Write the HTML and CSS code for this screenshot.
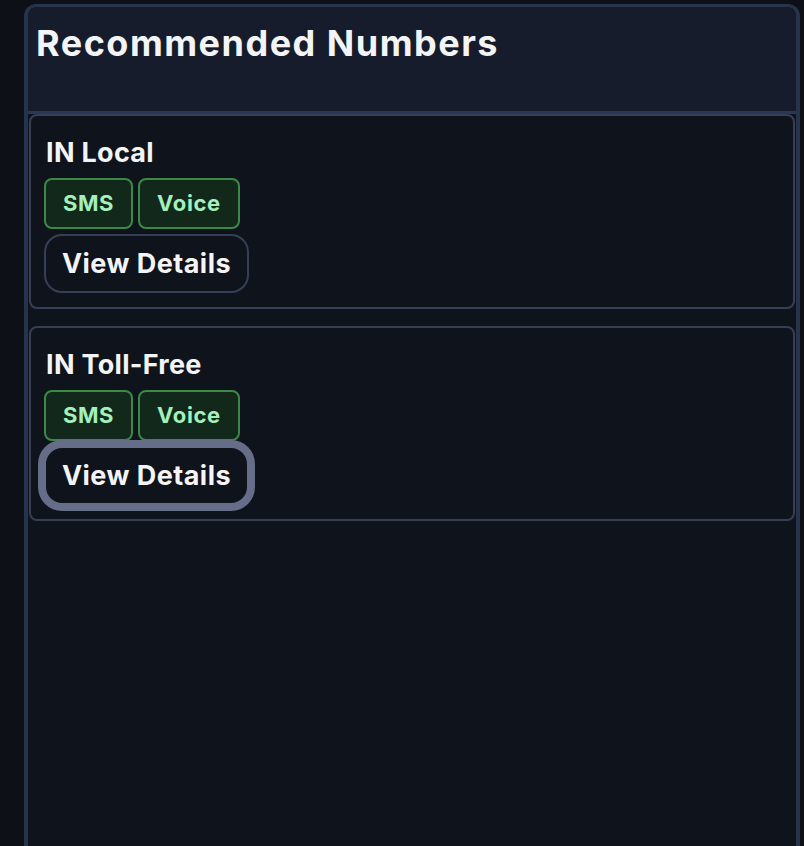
FILE: index.html
```html
<!DOCTYPE html>
<html lang="en">
<head>
<meta charset="utf-8">
<title>Recommended Numbers</title>
<link rel="stylesheet" href="styles.css">
</head>
<body>
  <section class="panel">
    <header class="panel-header">
      <h2 class="panel-title">Recommended Numbers</h2>
    </header>
    <div class="panel-body">
      <article class="card">
        <h3 class="card-title">IN Local</h3>
        <div class="badges">
          <span class="badge">SMS</span>
          <span class="badge">Voice</span>
        </div>
        <button class="btn" type="button">View Details</button>
      </article>
      <article class="card">
        <h3 class="card-title">IN Toll-Free</h3>
        <div class="badges">
          <span class="badge">SMS</span>
          <span class="badge">Voice</span>
        </div>
        <button class="btn btn-focus" type="button">View Details</button>
      </article>
    </div>
  </section>
</body>
</html>
```

FILE: styles.css
```css
* {
  box-sizing: border-box;
}

html, body {
  height: 100%;
}

body {
  margin: 0;
  padding: 4px 4px 0 24px;
  background: #0d1017;
  font-family: Inter, "Noto Sans", "Liberation Sans", sans-serif;
  color: #f3f4f6;
  overflow: hidden;
}

.panel {
  height: 100%;
  background: #0f131b;
  border-style: solid;
  border-color: #27324b;
  border-width: 3px 4px 0 4px;
  border-radius: 12px 12px 0 0;
  overflow: hidden;
}

.panel-header {
  height: 107px;
  padding: 15px 8px 0;
  background: #161c2b;
  border-bottom: 3px solid #2a3752;
}

.panel-title {
  margin: 0;
  font-size: 36px;
  line-height: 42px;
  font-weight: 700;
  letter-spacing: 1.5px;
  color: #f3f4f6;
}

.panel-body {
  padding: 0 1px 0 1px;
  display: flex;
  flex-direction: column;
  gap: 17px;
}

.card {
  border: 2px solid #363f57;
  border-radius: 8px;
  padding: 19px 16px 14px 13px;
  background: #0f131b;
  display: flex;
  flex-direction: column;
  align-items: flex-start;
}

.card-title {
  margin: 0 0 0 2px;
  font-size: 27px;
  line-height: 35px;
  font-weight: 700;
  letter-spacing: 0.3px;
  color: #f3f4f6;
}

.badges {
  display: flex;
  gap: 5px;
  margin-top: 8px;
}

.badge {
  display: inline-block;
  padding: 9px 17px;
  font-size: 22px;
  line-height: 29px;
  font-weight: 700;
  letter-spacing: 0.6px;
  color: #a3f0bd;
  background: #11281a;
  border: 2px solid #3b8847;
  border-radius: 8px;
}

.btn {
  margin-top: 5px;
  padding: 10px 16px 10px 16px;
  font-family: inherit;
  font-size: 27px;
  line-height: 35px;
  font-weight: 700;
  letter-spacing: 0.45px;
  color: #f3f4f6;
  background: #0f131b;
  border: 2px solid #363f57;
  border-radius: 18px;
}

.btn-focus {
  border-color: #666d88;
  box-shadow: 0 0 0 6px #666d88;
}
```
